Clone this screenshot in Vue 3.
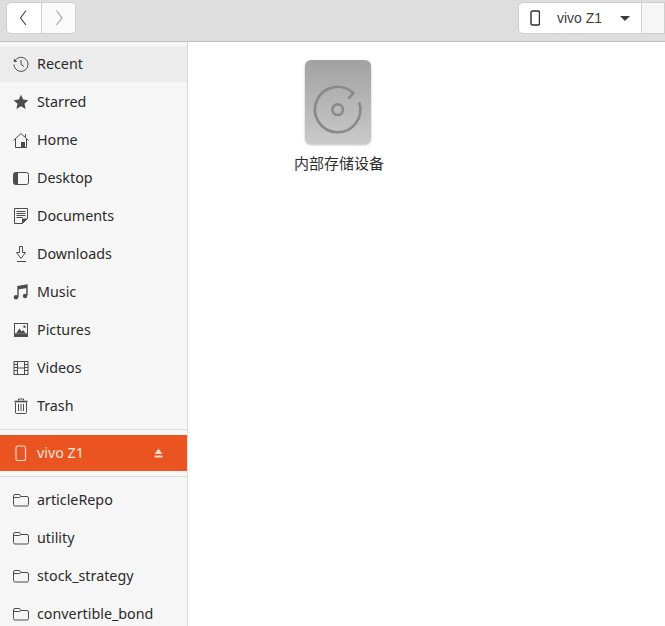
<script setup>
const places = [
  { name: 'Recent', icon: 'recent', active: true },
  { name: 'Starred', icon: 'star' },
  { name: 'Home', icon: 'home' },
  { name: 'Desktop', icon: 'desktop' },
  { name: 'Documents', icon: 'documents' },
  { name: 'Downloads', icon: 'downloads' },
  { name: 'Music', icon: 'music' },
  { name: 'Pictures', icon: 'pictures' },
  { name: 'Videos', icon: 'videos' },
  { name: 'Trash', icon: 'trash' }
]
const folders = ['articleRepo', 'utility', 'stock_strategy', 'convertible_bond']
</script>

<template>
  <div class="window">
    <header class="toolbar">
      <div class="nav">
        <button class="nav-btn">
          <svg width="16" height="16" viewBox="0 0 16 16"><path d="M10 .5 4.500 8l5.500 7" fill="none" stroke="#3c3c3c" stroke-width="1.100"/></svg>
        </button>
        <button class="nav-btn">
          <svg width="16" height="16" viewBox="0 0 16 16"><path d="M6.500 .5 12 8l-5.500 7" fill="none" stroke="#a0a0a0" stroke-width="1.100"/></svg>
        </button>
      </div>
      <div class="spacer"></div>
      <button class="device">
        <svg width="10" height="16" viewBox="0 0 10 16"><rect x="1" y="1" width="8.500" height="14" rx="1.500" fill="none" stroke="#2e2e2e" stroke-width="1.400"/></svg>
        <span class="device-name">vivo Z1</span>
        <svg class="caret" width="10" height="5" viewBox="0 0 10 5"><path d="M0 0h10L5 5z" fill="#3c3c3c"/></svg>
      </button>
      <div class="tail"></div>
    </header>
    <div class="body">
      <aside class="sidebar">
        <div v-for="p in places" :key="p.name" class="row" :class="{ active: p.active }">
          <svg class="icon" width="16" height="16" viewBox="0 0 16 16" fill="none" stroke="#4c4c4c" stroke-width="1">
            <template v-if="p.icon === 'recent'">
              <path d="M1.600 5.500A7 7 0 1 1 1 8.500"/>
              <path d="M0.800 2.500v3.500h3.500z" fill="#4c4c4c" stroke="none"/>
              <path d="M8 4v4.300l3 2.200"/>
            </template>
            <path v-else-if="p.icon === 'star'" d="M8 .8l2.200 4.800 5.200.6-3.900 3.500 1.100 5.200L8 12.300l-4.600 2.600 1.100-5.200L.6 6.200l5.200-.6z" fill="#4c4c4c" stroke="none"/>
            <template v-else-if="p.icon === 'home'">
              <path d="M.5 8.500 8 1.500l7.500 7"/>
              <path d="M2.500 7v8.500h11V7"/>
              <path d="M12.500 5V2"/>
              <rect x="8" y="10" width="4" height="5.500" fill="#4c4c4c" stroke="none"/>
            </template>
            <template v-else-if="p.icon === 'desktop'">
              <rect x=".5" y="2.500" width="15" height="12" rx="2"/>
              <path d="M2.500 2.500H5v12H2.500a2 2 0 0 1-2-2v-8a2 2 0 0 1 2-2z" fill="#4c4c4c" stroke="none"/>
            </template>
            <template v-else-if="p.icon === 'documents'">
              <path d="M1.500.5h13v10l-5 5h-8z"/>
              <path d="M3.500 3.500h9M3.500 5.500h9M3.500 7.500h9M3.500 9.500h6"/>
              <path d="M9 15.500V10.500h5.500z" fill="#4c4c4c" stroke="none"/>
            </template>
            <template v-else-if="p.icon === 'downloads'">
              <path d="M6.500 .5h3v6h3L8 12.500 3.500 6.500h3z"/>
              <path d="M4 15.500h9"/>
            </template>
            <template v-else-if="p.icon === 'music'">
              <path d="M5 13V2.500l9-1.500v10.500" stroke-width="1.400"/>
              <path d="M5 2.500l9-1.500v3l-9 1.500z" fill="#4c4c4c" stroke="none"/>
              <circle cx="3" cy="13.300" r="2.200" fill="#4c4c4c" stroke="none"/>
              <circle cx="12" cy="12" r="2.200" fill="#4c4c4c" stroke="none"/>
            </template>
            <template v-else-if="p.icon === 'pictures'">
              <rect x="1.500" y="1.500" width="13" height="13" />
              <path d="M1 11.500h14V15H1z" fill="#4c4c4c" stroke="none"/>
              <path d="M3 11.500 6.500 6.500l2 3L10 8l3 3.500z" fill="#4c4c4c" stroke="none"/>
              <circle cx="11.500" cy="4.800" r="1.200" fill="#4c4c4c" stroke="none"/>
            </template>
            <template v-else-if="p.icon === 'videos'">
              <rect x="1" y="1.500" width="14" height="13"/>
              <path d="M4.500 1.500v13M11.500 1.500v13M4.500 8h7M1 4.500h3.500M1 7.500h3.500M1 10.500h3.500M11.500 4.500H15M11.500 7.500H15M11.500 10.500H15"/>
            </template>
            <template v-else-if="p.icon === 'trash'">
              <path d="M2.500 4.500v10a1 1 0 0 0 1 1h9a1 1 0 0 0 1-1v-10"/>
              <path d="M1.500 3.500h13" stroke-width="1.600"/>
              <path d="M5.500 2.500v-1.500h5v1.500"/>
              <path d="M5.500 6v7M8 6v7M10.500 6v7"/>
            </template>
          </svg>
          <span class="label">{{ p.name }}</span>
        </div>
        <div class="sep"></div>
        <div class="row device-row">
          <svg class="icon" width="16" height="16" viewBox="0 0 16 16"><rect x="3" y="1" width="9.500" height="14.500" rx="1.800" fill="none" stroke="#fbd9cb" stroke-width="1.200"/></svg>
          <span class="label">vivo Z1</span>
          <svg class="eject" width="9" height="10" viewBox="0 0 9 10"><path d="M4.500 0.500 8.500 6H.5zM.5 7.500h8V9.500h-8z" fill="#fbd9cb"/></svg>
        </div>
        <div class="sep"></div>
        <div v-for="f in folders" :key="f" class="row">
          <svg class="icon" width="16" height="16" viewBox="0 0 16 16" fill="none" stroke="#4c4c4c" stroke-width="1">
            <path d="M2 2.500h4.500l1.500 2h6a1.500 1.500 0 0 1 1.500 1.500v6.500a1.500 1.500 0 0 1-1.500 1.500H2A1.500 1.500 0 0 1 .5 12.500V4A1.500 1.500 0 0 1 2 2.500z"/>
            <path d="M.5 5.500h6l1.500-1"/>
          </svg>
          <span class="label">{{ f }}</span>
        </div>
      </aside>
      <main class="content">
        <div class="item">
          <div class="drive">
            <svg width="66" height="84" viewBox="0 0 66 84">
              <defs>
                <linearGradient id="g" x1="0" y1="0" x2="0" y2="1">
                  <stop offset="0" stop-color="#a2a2a2"/>
                  <stop offset="1" stop-color="#c9c9c9"/>
                </linearGradient>
              </defs>
              <rect x="0" y="0" width="66" height="84" rx="6" fill="url(#g)"/>
              <path d="M43.400 38.700 48.300 33.100A22.700 22.700 0 1 0 54.200 42.400" fill="none" stroke="#8a8a8a" stroke-width="2.700"/>
              <circle cx="32.700" cy="49.700" r="5.300" fill="none" stroke="#8a8a8a" stroke-width="2.700"/>
            </svg>
          </div>
          <div class="item-label">内部存储设备</div>
        </div>
      </main>
    </div>
  </div>
</template>

<style scoped>
.window {
  width: 665px;
  height: 626px;
  overflow: hidden;
  display: flex;
  flex-direction: column;
  background: #fff;
  font-family: "Noto Sans", sans-serif;
}
.toolbar {
  flex: none;
  display: flex;
  align-items: flex-start;
  padding-top: 2px;
  box-sizing: border-box;
  background: #dedede;
  border-bottom: 1px solid #bdbdbd;
  height: 42px;
}
.nav {
  margin-left: 6px;
  display: flex;
  height: 32px;
  border: 1px solid #cfcfcf;
  border-radius: 5px;
  background: #fff;
  overflow: hidden;
  box-sizing: border-box;
  width: 70px;
}
.nav-btn {
  flex: 1;
  padding: 0;
  border: 0;
  background: transparent;
  display: flex;
  align-items: center;
  justify-content: center;
}
.nav-btn + .nav-btn {
  border-left: 1px solid #cfcfcf;
  background: #fafafa;
}
.spacer {
  flex: 1;
}
.device {
  width: 124px;
  height: 32px;
  box-sizing: border-box;
  padding: 0 0 0 11px;
  border: 1px solid #cfcfcf;
  border-radius: 5px 0 0 5px;
  background: #fff;
  display: flex;
  align-items: center;
}
.device-name {
  margin-left: 17px;
  font-family: "Liberation Sans", sans-serif;
  font-size: 14px;
  color: #3d3d3d;
}
.caret {
  margin-left: 18px;
}
.tail {
  width: 24px;
  height: 32px;
  margin-left: -1px;
  box-sizing: border-box;
  border: 1px solid #cfcfcf;
  background: #f6f6f6;
}
.body {
  flex: 1;
  display: flex;
  min-height: 0;
}
.sidebar {
  width: 188px;
  flex: none;
  box-sizing: border-box;
  background: #f6f6f6;
  border-right: 1px solid #dcdcdc;
  padding-top: 4px;
  overflow: hidden;
  display: flex;
  flex-direction: column;
  gap: 2px;
}
.row {
  flex: none;
  height: 36px;
  display: flex;
  align-items: center;
  padding-left: 13px;
  font-size: 14.3px;
  color: #2a2a2a;
}
.row.active {
  background: #ececec;
}
.label {
  margin-left: 8px;
  padding-bottom: 2px;
}
.sep {
  flex: none;
  height: 1px;
  background: #dcdcdc;
  margin: 3px 0;
}
.device-row {
  background: #e95420;
  color: #fbe3d9;
}
.eject {
  margin-left: auto;
  margin-right: 24px;
}
.content {
  flex: 1;
  padding: 18px 0 0 90px;
}
.item {
  width: 120px;
  display: flex;
  flex-direction: column;
  align-items: center;
}
.drive {
  height: 84px;
  filter: drop-shadow(0 1px 1px rgba(0, 0, 0, .25));
}
.item-label {
  margin-top: 9px;
  padding-left: 2px;
  font-family: "Noto Sans CJK SC", sans-serif;
  font-size: 15px;
  line-height: 20px;
  color: #2e2e2e;
}
</style>
